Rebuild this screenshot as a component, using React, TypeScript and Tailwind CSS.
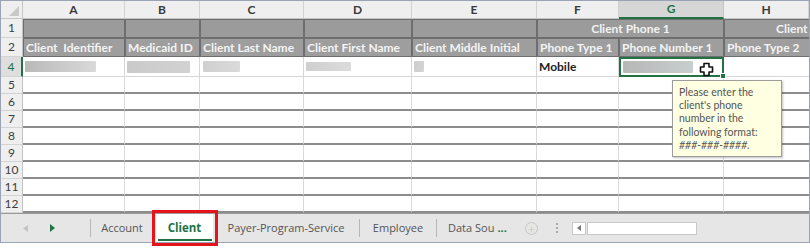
import React from "react";

const cols = ["A", "B", "C", "D", "E", "F", "G", "H"];

const row2 = [
  "Client\u00a0 Identifier",
  "Medicaid ID",
  "Client Last Name",
  "Client First Name",
  "Client Middle Initial",
  "Phone Type 1",
  "Phone Number 1",
  "Phone Type 2",
];

function RowHead({ n, active }: { n: string; active?: boolean }) {
  return (
    <div
      className={
        "flex items-center justify-center text-[12px] border-b border-[#d3d3d3] " +
        (active
          ? "bg-[#dedede] text-[#217346] border-r-2 border-r-[#217346]"
          : "bg-[#efefef] text-[#3d3d3d] border-r border-r-[#c4c4c4]")
      }
    >
      {n}
    </div>
  );
}

function Bar({ w, h = 11, ml = 2, from, to }: { w: number; h?: number; ml?: number; from: string; to: string }) {
  return (
    <div
      className="rounded-[1px] blur-[0.6px]"
      style={{ width: w, height: h, marginLeft: ml, background: `linear-gradient(to right, ${from}, ${to})` }}
    />
  );
}

export default function App() {
  return (
    <div className="relative w-[810px] h-[251px] bg-white font-['Lato',sans-serif] overflow-hidden">
      <div className="w-[810px] h-[243px] border border-[#9aa4b6] flex flex-col overflow-hidden">
        {/* grid */}
        <div className="grid grid-cols-[22px_102px_75px_104px_108px_125px_82px_105px_1fr] grid-rows-[18px_19px_19px_20px_repeat(8,17px)] shrink-0">
          {/* column header row */}
          <div className="bg-[#efefef] border-r border-b border-[#c4c4c4] flex items-end justify-end pr-[3px] pb-[2px]">
            <svg width="10" height="10" viewBox="0 0 10 10">
              <polygon points="10,0 10,10 0,10" fill="#c9c9c9" />
            </svg>
          </div>
          {cols.map((c) => (
            <div
              key={c}
              className={
                "flex items-center justify-center text-[12px] font-bold " +
                (c === "G"
                  ? "bg-[#d6d6d6] text-[#217346] border-r border-r-[#c4c4c4] border-b-2 border-b-[#217346]"
                  : "bg-[#efefef] text-[#3a3a3a] border-r border-r-[#d2d2d2] border-b border-b-[#c4c4c4]")
              }
            >
              {c}
            </div>
          ))}

          {/* row 1 */}
          <RowHead n="1" />
          {[0, 1, 2, 3, 4].map((i) => (
            <div key={i} className="bg-[#9b9b9b] border border-[#6e6e6e]" />
          ))}
          <div className="col-span-2 bg-[#9b9b9b] border border-[#6e6e6e] flex items-center justify-center text-[12px] font-bold text-[#f2f2f2] whitespace-nowrap">
            Client Phone 1
          </div>
          <div className="bg-[#9b9b9b] border border-[#6e6e6e] border-r-0 flex items-center pl-[51px] text-[12px] font-bold text-[#f2f2f2] whitespace-nowrap overflow-hidden">
            Client
          </div>

          {/* row 2 */}
          <RowHead n="2" />
          {row2.map((t, i) => (
            <div
              key={t}
              className={
                "bg-[#9e9e9e] border border-[#6e6e6e] flex items-center pl-[2px] text-[12px] font-bold text-[#f4f4f4] whitespace-nowrap overflow-hidden " +
                (i === 7 ? "border-r-0" : "")
              }
            >
              {t}
            </div>
          ))}

          {/* row 4 */}
          <RowHead n="4" active />
          <div className="flex items-center border-r border-b border-[#d6d6d6]">
            <Bar w={71} from="#b9b9b9" to="#d9d9d9" />
          </div>
          <div className="flex items-center border-r border-b border-[#d6d6d6]">
            <Bar w={63} h={12} from="#cacaca" to="#d2d2d2" />
          </div>
          <div className="flex items-center border-r border-b border-[#d6d6d6]">
            <Bar w={37} ml={3} from="#d0d0d0" to="#dadada" />
          </div>
          <div className="flex items-center border-r border-b border-[#d6d6d6]">
            <Bar w={45} h={9} ml={2} from="#cfcfcf" to="#dcdcdc" />
          </div>
          <div className="flex items-center border-r border-b border-[#d6d6d6]">
            <Bar w={10} ml={2} from="#cdcdcd" to="#d4d4d4" />
          </div>
          <div className="flex items-center border-r border-b border-[#d6d6d6] pl-[2px] text-[12px] font-bold text-[#222]">
            Mobile
          </div>
          <div className="relative flex items-center border-2 border-[#217346]">
            <Bar w={70} h={12} ml={2} from="#b7b7b7" to="#c8cfcf" />
            <svg className="absolute left-[78px] top-[3px]" width="15" height="15" viewBox="0 0 15 15">
              <path
                d="M5 1.5h5v3.5h3.5v5H10v3.5H5V10H1.5V5H5z"
                fill="#fff"
                stroke="#111"
                strokeWidth="1.6"
                strokeLinejoin="round"
              />
            </svg>
            <div className="absolute right-[-4px] bottom-[-4px] w-[6px] h-[6px] bg-[#217346] border border-white" />
          </div>
          <div className="border-b border-[#d6d6d6]" />

          {/* rows 5-12 */}
          {["5", "6", "7", "8", "9", "10", "11", "12"].map((n) => (
            <React.Fragment key={n}>
              <RowHead n={n} />
              {cols.map((c, i) => (
                <div
                  key={c}
                  className={
                    "border-b-2 border-b-[#8c8c8c] " + (i < 7 ? "border-r border-r-[#dadada]" : "")
                  }
                />
              ))}
            </React.Fragment>
          ))}
        </div>

        {/* tab bar */}
        <div className="flex-1 flex items-center bg-[#e6e6e6] border-t border-[#9a9a9a] text-[11px] text-[#555] font-['Open_Sans',sans-serif] whitespace-nowrap">
          <div className="w-[89px] flex items-center pl-[22px]">
            <svg width="5" height="7" viewBox="0 0 5 7">
              <polygon points="5,0 5,7 0,3.5" fill="#c2c2c2" />
            </svg>
            <svg className="ml-[22px]" width="5" height="8" viewBox="0 0 5 8">
              <polygon points="0,0 5,4 0,8" fill="#217346" />
            </svg>
          </div>
          <div className="w-px h-[18px] bg-[#b8b8b8]" />
          <div className="w-[62px] flex justify-center">Account</div>
          <div className="w-[3px]" />
          <div className="relative w-[57px] self-stretch bg-white flex items-center justify-center font-bold text-[#217346] text-[11.5px]">
            Client
            <div className="absolute left-[2px] right-[1px] bottom-[1px] h-[2px] bg-[#217346]" />
          </div>
          <div className="w-[146px] flex justify-center">Payer-Program-Service</div>
          <div className="w-px h-[18px] bg-[#b8b8b8]" />
          <div className="w-[76px] flex justify-center">Employee</div>
          <div className="w-px h-[18px] bg-[#b8b8b8]" />
          <div className="pl-[11px] w-[88px] flex">
            <span>Data Sou</span>
            <span className="text-[#217346] font-bold ml-[3px]">...</span>
          </div>
          <div className="w-[13px] h-[13px] rounded-full border border-[#c6c6c6] flex items-center justify-center text-[#c6c6c6] text-[11px] leading-none">
            +
          </div>
          <div className="ml-[18px] flex flex-col gap-[2px]">
            <div className="w-[2px] h-[2px] bg-[#aaa]" />
            <div className="w-[2px] h-[2px] bg-[#aaa]" />
            <div className="w-[2px] h-[2px] bg-[#aaa]" />
          </div>
          <div className="ml-[14px] w-[14px] h-[13px] bg-white border border-[#c8c8c8] flex items-center justify-center">
            <svg width="4" height="6" viewBox="0 0 4 6">
              <polygon points="4,0 4,6 0,3" fill="#777" />
            </svg>
          </div>
          <div className="ml-[1px] w-[110px] h-[13px] bg-white border border-[#c8c8c8]" />
        </div>
      </div>

      {/* red annotation box */}
      <div className="absolute left-[152px] top-[210px] w-[66px] h-[36px] border-[3px] border-[#e3151b]" />

      {/* tooltip */}
      <div className="absolute left-[672px] top-[80px] w-[110px] h-[77px] bg-[#ffffe1] border border-[#9c9c9c] shadow-[1px_1px_2px_rgba(0,0,0,0.25)] pl-[6px] pt-[5px] text-[10.5px] leading-[13.2px] text-[#555] font-['Lato',sans-serif]">
        <div>Please enter the</div>
        <div>client's phone</div>
        <div>number in the</div>
        <div>following format:</div>
        <div className="italic">###-###-####.</div>
      </div>
    </div>
  );
}
